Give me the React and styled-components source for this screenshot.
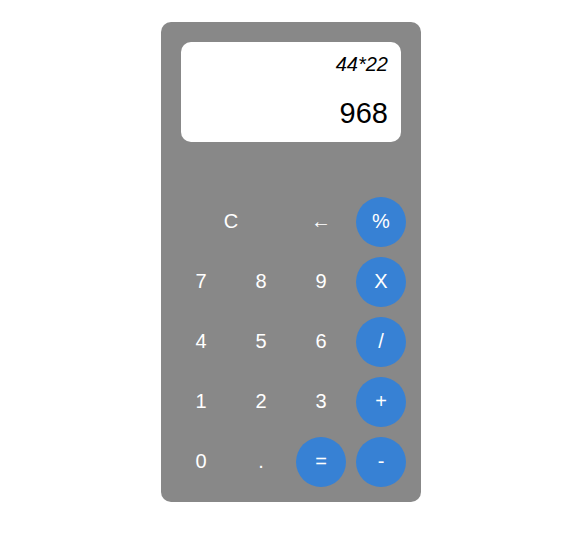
import React from "react";
import styled, { createGlobalStyle } from "styled-components";

const Global = createGlobalStyle`
  html, body { margin: 0; padding: 0; background: #ffffff; }
  body { font-family: "Liberation Sans", Arial, sans-serif; }
`;

const Page = styled.div`
  display: flex;
  justify-content: center;
  padding-top: 22px;
  padding-right: 2px;
`;

const Calculator = styled.div`
  width: 260px;
  height: 480px;
  box-sizing: border-box;
  background: #888888;
  border-radius: 10px;
  padding: 20px 15px 15px;
  display: flex;
  flex-direction: column;
  justify-content: space-between;
`;

const Display = styled.div`
  margin: 0 5px;
  height: 100px;
  background: #ffffff;
  border-radius: 10px;
  box-sizing: border-box;
  padding: 9px 13px 0 10px;
  display: flex;
  flex-direction: column;
  align-items: flex-end;
  color: #000;
`;

const Expression = styled.div`
  font-style: italic;
  font-size: 20px;
  line-height: 26px;
`;

const Result = styled.div`
  margin-top: 20px;
  font-size: 29px;
  line-height: 32px;
`;

const Keys = styled.div`
  display: grid;
  grid-template-columns: repeat(4, 50px);
  grid-auto-rows: 50px;
  gap: 10px;
`;

const Key = styled.button`
  border: none;
  margin: 0;
  padding: 0 0 2px;
  font-family: "Liberation Sans", Arial, sans-serif;
  font-size: 20px;
  color: #ffffff;
  border-radius: 50%;
  background: ${(p) => (p.$op ? "#3781d4" : "transparent")};
  grid-column: ${(p) => (p.$span ? `span ${p.$span}` : "auto")};
  cursor: pointer;
  display: flex;
  align-items: center;
  justify-content: center;
`;

const rows = [
  [{ l: "C", span: 2 }, { l: "←" }, { l: "%", op: true }],
  [{ l: "7" }, { l: "8" }, { l: "9" }, { l: "X", op: true }],
  [{ l: "4" }, { l: "5" }, { l: "6" }, { l: "/", op: true }],
  [{ l: "1" }, { l: "2" }, { l: "3" }, { l: "+", op: true }],
  [{ l: "0" }, { l: "." }, { l: "=", op: true }, { l: "-", op: true }],
];

export default function App() {
  return (
    <>
      <Global />
      <Page>
        <Calculator>
          <Display>
            <Expression>44*22</Expression>
            <Result>968</Result>
          </Display>
          <Keys>
            {rows.flat().map((k, i) => (
              <Key key={i} $op={k.op} $span={k.span}>
                {k.l}
              </Key>
            ))}
          </Keys>
        </Calculator>
      </Page>
    </>
  );
}
